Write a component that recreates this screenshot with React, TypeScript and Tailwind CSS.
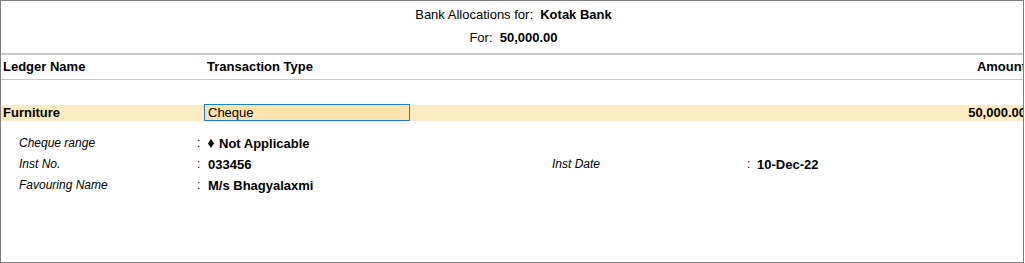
const font = { fontFamily: '"Liberation Sans", Arial, sans-serif' };

function Diamond() {
  return (
    <svg width="6" height="9" viewBox="0 0 6 9" className="inline-block mr-[5px] -mt-[3px]">
      <path d="M3 0 L6 4.5 L3 9 L0 4.5 Z" fill="#000" />
    </svg>
  );
}

function DetailRow({
  label,
  value,
  label2,
  value2,
}: {
  label: string;
  value: React.ReactNode;
  label2?: string;
  value2?: string;
}) {
  return (
    <div className="flex h-[21px] items-center leading-[21px]">
      <div className="w-[196px] shrink-0 pl-[18px] text-[12px] italic">{label}</div>
      <div className="w-[11px] shrink-0 text-[12px]">:</div>
      <div className="w-[344px] shrink-0 text-[13px] font-bold">{value}</div>
      {label2 && (
        <>
          <div className="w-[195px] shrink-0 text-[12px] italic">{label2}</div>
          <div className="w-[10px] shrink-0 text-[12px]">:</div>
          <div className="text-[13px] font-bold">{value2}</div>
        </>
      )}
    </div>
  );
}

export default function App() {
  return (
    <div className="w-[1025px] h-[263px] bg-white">
      <div
        className="w-[1024px] h-[263px] border border-[#7f7f7f] overflow-hidden text-black"
        style={font}
      >
        <div className="w-[1025px]">
          {/* Title */}
          <div className="h-[52px] pt-[3px] flex flex-col items-center">
            <div className="leading-[22px] text-[13px]">
              Bank Allocations for:&nbsp; <span className="font-bold">Kotak Bank</span>
            </div>
            <div className="leading-[23px] text-[13px]">
              For:&nbsp; <span className="font-bold">50,000.00</span>
            </div>
          </div>
          <div className="h-[2px] bg-[#c8c8c8]" />

          {/* Column headers */}
          <div className="flex h-[24px] items-center text-[13px] font-bold">
            <div className="w-[206px] shrink-0 pl-[2px]">Ledger Name</div>
            <div className="flex-1">Transaction Type</div>
            <div className="text-right">Amount</div>
          </div>
          <div className="h-px bg-[#c8c8c8]" />

          <div className="h-[25px]" />

          {/* Selected row */}
          <div className="flex h-[16px] items-center bg-[#fdebc2] text-[13px]">
            <div className="w-[203px] shrink-0 pl-[2px] font-bold">Furniture</div>
            <div className="w-[206px] h-[17px] -mt-[1px] shrink-0 border border-[#1a7fc4] bg-[#fde3ae] pl-[3px] leading-[15px]">
              Cheque
            </div>
            <div className="flex-1 text-right font-bold">50,000.00</div>
          </div>

          {/* Details */}
          <div className="mt-[12px]">
            <DetailRow
              label="Cheque range"
              value={
                <>
                  <Diamond />
                  Not Applicable
                </>
              }
            />
            <DetailRow label="Inst No." value="033456" label2="Inst Date" value2="10-Dec-22" />
            <DetailRow label="Favouring Name" value="M/s Bhagyalaxmi" />
          </div>
        </div>
      </div>
    </div>
  );
}
